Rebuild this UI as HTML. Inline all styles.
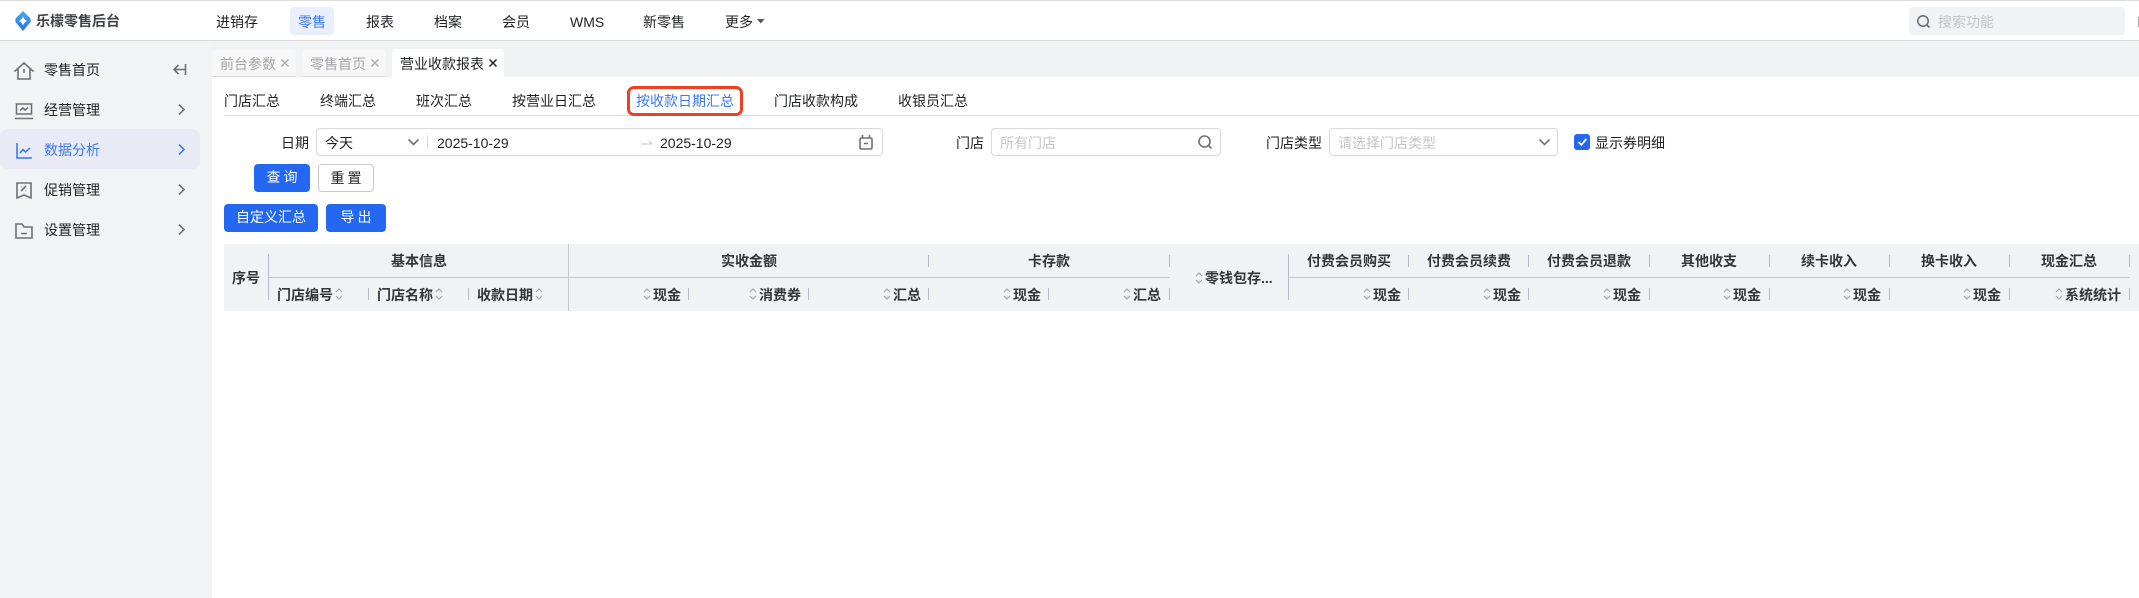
<!DOCTYPE html>
<html lang="zh-CN"><head><meta charset="utf-8"><title>营业收款报表</title>
<style>
*{box-sizing:border-box}
html,body{margin:0;padding:0;width:2139px;height:598px;overflow:hidden;background:#fff}
body{position:relative;font:14px/20px "Liberation Sans","Noto Sans CJK SC",sans-serif;color:#1f2024}
.t{position:absolute;white-space:nowrap;height:20px;line-height:20px}
.b{font-weight:700;color:#33353a}
.r{position:absolute}
svg{position:absolute;overflow:visible}
.ic{fill:none;stroke:#6f7178;stroke-width:1.6}
.v{position:absolute;width:1px;background:#b9bcc8}
.sort{position:absolute;width:8px;height:14px;fill:none;stroke:#a4a6ab;stroke-width:1.2}
.btn{position:absolute;border-radius:4px;text-align:center;height:28px;line-height:27px}
.box{position:absolute;border:1px solid #d9d9d9;border-radius:4px;height:28px;top:128px;background:#fff}
</style></head><body>
<div class="r" style="left:0;top:0;width:2139px;height:1px;background:#dcdcdc"></div>
<div class="r" style="left:0;top:40px;width:2139px;height:1px;background:#d8d8d8"></div>
<div class="r" style="left:0;top:41px;width:212px;height:557px;background:#f2f3f5"></div>
<div class="r" style="left:212px;top:41px;width:1927px;height:36px;background:#f1f2f4"></div>

<svg style="left:15px;top:11px" width="16" height="20" viewBox="0 0 16 20"><defs><linearGradient id="lg" x1="0" y1="0" x2="0" y2="1"><stop offset="0" stop-color="#49a8f5"/><stop offset="1" stop-color="#2276ea"/></linearGradient></defs><path d="M8 0 15 7Q16 8.500 15.500 11L8 20 .5 11Q0 8.500 1 7Z" fill="url(#lg)"/><path d="M8 5.500Q9 8.500 12 10 9 11.500 8 14.500 7 11.500 4 10 7 8.500 8 5.500Z" fill="#fff"/></svg>
<div class="t" style="left:36px;top:11px;font-weight:700;color:#3f4146">乐檬零售后台</div>
<div class="t" style="left:216px;top:12px">进销存</div>
<div class="r" style="left:290px;top:7px;width:44px;height:28px;background:#e9effc;border-radius:4px"></div>
<div class="t" style="left:298px;top:12px;color:#3b78f0">零售</div>
<div class="t" style="left:366px;top:12px">报表</div>
<div class="t" style="left:434px;top:12px">档案</div>
<div class="t" style="left:502px;top:12px">会员</div>
<div class="t" style="left:570px;top:12px">WMS</div>
<div class="t" style="left:643px;top:12px">新零售</div>
<div class="t" style="left:725px;top:12px">更多</div>
<svg style="left:757px;top:19px" width="8" height="5"><path d="M0 0H7.500L3.750 4.500Z" fill="#55575c"/></svg>
<div class="r" style="left:1909px;top:7px;width:216px;height:28px;background:#f1f2f4;border-radius:4px"></div>
<svg style="left:1917px;top:15px" width="13" height="13" class="ic"><circle cx="6" cy="6" r="5.200"/><path d="M9.700 9.700 12.500 12.500"/></svg>
<div class="t" style="left:1938px;top:12px;color:#c4c5c8">搜索功能</div>
<div class="r" style="left:2138px;top:17px;width:1px;height:10px;background:#aaa"></div>

<div class="r" style="left:0;top:129px;width:200px;height:40px;background:#e8ebf5;border-radius:8px"></div>
<svg style="left:14px;top:62px" width="20" height="18" viewBox="0 0 20 18" class="ic"><path d="M.5 9.500 10 1 19.500 9.500M4 7V17H16V7M10 7V11"/></svg>
<svg style="left:15px;top:103px" width="18" height="17" viewBox="0 0 18 17" class="ic"><path d="M1.500 1H16.500V11H1.500ZM0 15.500H18M5 7.500 8 5 10 7 13 4.500"/></svg>
<svg style="left:16px;top:143px" width="16" height="16" viewBox="0 0 16 16" fill="none" stroke="#3574f0" stroke-width="1.500"><path d="M1 0V15H16M4 10 7 6.500 9.500 9 14 5"/></svg>
<svg style="left:16px;top:182px" width="16" height="17" viewBox="0 0 16 17" class="ic"><path d="M1 1H15V16L8 13 1 16ZM5 9 10 4M5.500 4.500H6M9.500 8.500H10"/></svg>
<svg style="left:15px;top:223px" width="18" height="16" viewBox="0 0 18 16" class="ic"><path d="M1 1H7L9 4H17V15H1ZM6 10.500H12"/></svg>
<div class="t" style="left:44px;top:60px">零售首页</div>
<div class="t" style="left:44px;top:100px">经营管理</div>
<div class="t" style="left:44px;top:140px;color:#3b78f0">数据分析</div>
<div class="t" style="left:44px;top:180px">促销管理</div>
<div class="t" style="left:44px;top:220px">设置管理</div>
<svg style="left:173px;top:64px" width="13" height="11" class="ic"><path d="M12.500 0V11M12 5.500H1M5.500 1 1 5.500 5.500 10"/></svg>
<svg style="left:178px;top:104px" width="7" height="11" class="ic"><path d="M1 .5 6 5.500 1 10.500"/></svg>
<svg style="left:178px;top:144px" width="7" height="11" fill="none" stroke="#3574f0" stroke-width="1.500"><path d="M1 .5 6 5.500 1 10.500"/></svg>
<svg style="left:178px;top:184px" width="7" height="11" class="ic"><path d="M1 .5 6 5.500 1 10.500"/></svg>
<svg style="left:178px;top:224px" width="7" height="11" class="ic"><path d="M1 .5 6 5.500 1 10.500"/></svg>

<div class="r" style="left:212px;top:49px;width:84px;height:28px;background:#f7f7f8;border-radius:4px 4px 0 0;border-bottom:1px solid #dcdcdc"></div>
<div class="r" style="left:302px;top:49px;width:84px;height:28px;background:#f7f7f8;border-radius:4px 4px 0 0;border-bottom:1px solid #dcdcdc"></div>
<div class="r" style="left:392px;top:49px;width:112px;height:28px;background:#fff;border-radius:4px 4px 0 0"></div>
<div class="t" style="left:220px;top:54px;color:#a3a4a7">前台参数</div>
<div class="t" style="left:310px;top:54px;color:#a3a4a7">零售首页</div>
<div class="t" style="left:400px;top:54px">营业收款报表</div>
<svg style="left:281px;top:59px" width="8" height="8" fill="none" stroke="#a8a9ac" stroke-width="1.300"><path d="M.5.500 7.500 7.500M7.500.500.5 7.500"/></svg>
<svg style="left:371px;top:59px" width="8" height="8" fill="none" stroke="#a8a9ac" stroke-width="1.300"><path d="M.5.500 7.500 7.500M7.500.500.5 7.500"/></svg>
<svg style="left:489px;top:59px" width="8" height="8" fill="none" stroke="#222" stroke-width="1.500"><path d="M.5.500 7.500 7.500M7.500.500.5 7.500"/></svg>

<div class="t" style="left:224px;top:91px">门店汇总</div>
<div class="t" style="left:320px;top:91px">终端汇总</div>
<div class="t" style="left:416px;top:91px">班次汇总</div>
<div class="t" style="left:512px;top:91px">按营业日汇总</div>
<div class="t" style="left:636px;top:91px;color:#3b78f0">按收款日期汇总</div>
<div class="t" style="left:774px;top:91px">门店收款构成</div>
<div class="t" style="left:898px;top:91px">收银员汇总</div>
<div class="r" style="left:224px;top:115px;width:1915px;height:1px;background:#dcdcdc"></div>
<div class="r" style="left:627px;top:86px;width:116px;height:30px;border:3px solid #ee4023;border-radius:7px"></div>

<div class="t" style="left:281px;top:133px">日期</div>
<div class="box" style="left:316px;width:567px"></div>
<div class="t" style="left:325px;top:133px">今天</div>
<svg style="left:408px;top:139px" width="11" height="7" class="ic"><path d="M.5.500 5.500 5.500 10.500.500"/></svg>
<div class="r" style="left:427px;top:135px;width:1px;height:14px;background:#d9d9d9"></div>
<div class="t" style="left:437px;top:133px">2025-10-29</div>
<svg style="left:641px;top:141px" width="12" height="4" fill="none" stroke="#c4c5c8"><path d="M0 3H11M8 .5 11 3"/></svg>
<div class="t" style="left:660px;top:133px">2025-10-29</div>
<svg style="left:859px;top:135px" width="14" height="15" viewBox="0 0 14 15" class="ic"><path d="M2.500 3H11.500Q13 3 13 4.500V12.500Q13 14 11.500 14H2.500Q1 14 1 12.500V4.500Q1 3 2.500 3ZM3.500 0V3M10.500 0V3M5 8.500H9"/></svg>
<div class="t" style="left:956px;top:133px">门店</div>
<div class="box" style="left:991px;width:230px"></div>
<div class="t" style="left:1000px;top:133px;color:#c4c5c8">所有门店</div>
<svg style="left:1198px;top:135px" width="14" height="14" class="ic"><circle cx="6.500" cy="6.500" r="5.500"/><path d="M10.500 10.500 13.500 13.500"/></svg>
<div class="t" style="left:1266px;top:133px">门店类型</div>
<div class="box" style="left:1329px;width:229px"></div>
<div class="t" style="left:1338px;top:133px;color:#c4c5c8">请选择门店类型</div>
<svg style="left:1539px;top:139px" width="11" height="7" class="ic"><path d="M.5.500 5.500 5.500 10.500.500"/></svg>
<div class="r" style="left:1574px;top:134px;width:16px;height:16px;background:#2468f2;border-radius:3px"></div>
<svg style="left:1578px;top:138px" width="9" height="8" fill="none" stroke="#fff" stroke-width="1.800"><path d="M.5 4 3.300 6.800 8.300 1"/></svg>
<div class="t" style="left:1595px;top:133px">显示券明细</div>

<div class="btn" style="left:254px;top:164px;width:56px;background:#2468f2;color:#fff;letter-spacing:3px;text-indent:3px">查询</div>
<div class="btn" style="left:318px;top:164px;width:56px;border:1px solid #c9c9c9;letter-spacing:3px;text-indent:3px;line-height:26px">重置</div>
<div class="btn" style="left:224px;top:204px;width:94px;background:#2468f2;color:#fff">自定义汇总</div>
<div class="btn" style="left:326px;top:204px;width:60px;background:#2468f2;color:#fff;letter-spacing:3px;text-indent:3px">导出</div>

<div class="r" style="left:224px;top:244px;width:1915px;height:67px;background:#f1f2f5"></div>
<div class="r" style="left:268px;top:277px;width:902px;height:1px;background:#c5c7d1"></div>
<div class="r" style="left:1289px;top:277px;width:841px;height:1px;background:#c5c7d1"></div>
<div class="v" style="left:268px;top:254px;height:46px"></div>
<div class="v" style="left:568px;top:244px;height:67px;background:#c5c7d1"></div>
<div class="v" style="left:1288px;top:254px;height:46px"></div>
<div class="v" style="left:928px;top:255px;height:12px"></div><div class="v" style="left:1169px;top:255px;height:12px"></div>
<div class="v" style="left:1408px;top:255px;height:12px"></div><div class="v" style="left:1528px;top:255px;height:12px"></div>
<div class="v" style="left:1649px;top:255px;height:12px"></div><div class="v" style="left:1769px;top:255px;height:12px"></div>
<div class="v" style="left:1889px;top:255px;height:12px"></div><div class="v" style="left:2009px;top:255px;height:12px"></div><div class="v" style="left:2129px;top:255px;height:12px"></div>
<div class="v" style="left:368px;top:288px;height:12px"></div><div class="v" style="left:468px;top:288px;height:12px"></div>
<div class="v" style="left:688px;top:288px;height:12px"></div><div class="v" style="left:808px;top:288px;height:12px"></div>
<div class="v" style="left:928px;top:288px;height:12px"></div><div class="v" style="left:1048px;top:288px;height:12px"></div>
<div class="v" style="left:1169px;top:288px;height:12px"></div><div class="v" style="left:1408px;top:288px;height:12px"></div>
<div class="v" style="left:1528px;top:288px;height:12px"></div><div class="v" style="left:1649px;top:288px;height:12px"></div>
<div class="v" style="left:1769px;top:288px;height:12px"></div><div class="v" style="left:1889px;top:288px;height:12px"></div>
<div class="v" style="left:2009px;top:288px;height:12px"></div><div class="v" style="left:2129px;top:288px;height:12px"></div>

<div class="t b" style="left:232px;top:268px">序号</div>
<div class="t b" style="left:391px;top:251px">基本信息</div>
<div class="t b" style="left:721px;top:251px">实收金额</div>
<div class="t b" style="left:1028px;top:251px">卡存款</div>
<div class="t b" style="left:1307px;top:251px">付费会员购买</div>
<div class="t b" style="left:1427px;top:251px">付费会员续费</div>
<div class="t b" style="left:1547px;top:251px">付费会员退款</div>
<div class="t b" style="left:1681px;top:251px">其他收支</div>
<div class="t b" style="left:1801px;top:251px">续卡收入</div>
<div class="t b" style="left:1921px;top:251px">换卡收入</div>
<div class="t b" style="left:2041px;top:251px">现金汇总</div>
<div class="t b" style="left:277px;top:285px">门店编号</div>
<div class="t b" style="left:377px;top:285px">门店名称</div>
<div class="t b" style="left:477px;top:285px">收款日期</div>
<div class="t b" style="left:653px;top:285px">现金</div>
<div class="t b" style="left:759px;top:285px">消费券</div>
<div class="t b" style="left:893px;top:285px">汇总</div>
<div class="t b" style="left:1013px;top:285px">现金</div>
<div class="t b" style="left:1133px;top:285px">汇总</div>
<div class="t b" style="left:1205px;top:268px">零钱包存...</div>
<div class="t b" style="left:1373px;top:285px">现金</div>
<div class="t b" style="left:1493px;top:285px">现金</div>
<div class="t b" style="left:1613px;top:285px">现金</div>
<div class="t b" style="left:1733px;top:285px">现金</div>
<div class="t b" style="left:1853px;top:285px">现金</div>
<div class="t b" style="left:1973px;top:285px">现金</div>
<div class="t b" style="left:2065px;top:285px">系统统计</div>

<svg class="sort" style="left:335px;top:287px" viewBox="0 0 8 14"><path d="M1 5 4 2 7 5M1 9 4 12 7 9"/></svg>
<svg class="sort" style="left:435px;top:287px" viewBox="0 0 8 14"><path d="M1 5 4 2 7 5M1 9 4 12 7 9"/></svg>
<svg class="sort" style="left:535px;top:287px" viewBox="0 0 8 14"><path d="M1 5 4 2 7 5M1 9 4 12 7 9"/></svg>
<svg class="sort" style="left:643px;top:287px" viewBox="0 0 8 14"><path d="M1 5 4 2 7 5M1 9 4 12 7 9"/></svg>
<svg class="sort" style="left:749px;top:287px" viewBox="0 0 8 14"><path d="M1 5 4 2 7 5M1 9 4 12 7 9"/></svg>
<svg class="sort" style="left:883px;top:287px" viewBox="0 0 8 14"><path d="M1 5 4 2 7 5M1 9 4 12 7 9"/></svg>
<svg class="sort" style="left:1003px;top:287px" viewBox="0 0 8 14"><path d="M1 5 4 2 7 5M1 9 4 12 7 9"/></svg>
<svg class="sort" style="left:1123px;top:287px" viewBox="0 0 8 14"><path d="M1 5 4 2 7 5M1 9 4 12 7 9"/></svg>
<svg class="sort" style="left:1195px;top:271px" viewBox="0 0 8 14"><path d="M1 5 4 2 7 5M1 9 4 12 7 9"/></svg>
<svg class="sort" style="left:1363px;top:287px" viewBox="0 0 8 14"><path d="M1 5 4 2 7 5M1 9 4 12 7 9"/></svg>
<svg class="sort" style="left:1483px;top:287px" viewBox="0 0 8 14"><path d="M1 5 4 2 7 5M1 9 4 12 7 9"/></svg>
<svg class="sort" style="left:1603px;top:287px" viewBox="0 0 8 14"><path d="M1 5 4 2 7 5M1 9 4 12 7 9"/></svg>
<svg class="sort" style="left:1723px;top:287px" viewBox="0 0 8 14"><path d="M1 5 4 2 7 5M1 9 4 12 7 9"/></svg>
<svg class="sort" style="left:1843px;top:287px" viewBox="0 0 8 14"><path d="M1 5 4 2 7 5M1 9 4 12 7 9"/></svg>
<svg class="sort" style="left:1963px;top:287px" viewBox="0 0 8 14"><path d="M1 5 4 2 7 5M1 9 4 12 7 9"/></svg>
<svg class="sort" style="left:2055px;top:287px" viewBox="0 0 8 14"><path d="M1 5 4 2 7 5M1 9 4 12 7 9"/></svg>
</body></html>
